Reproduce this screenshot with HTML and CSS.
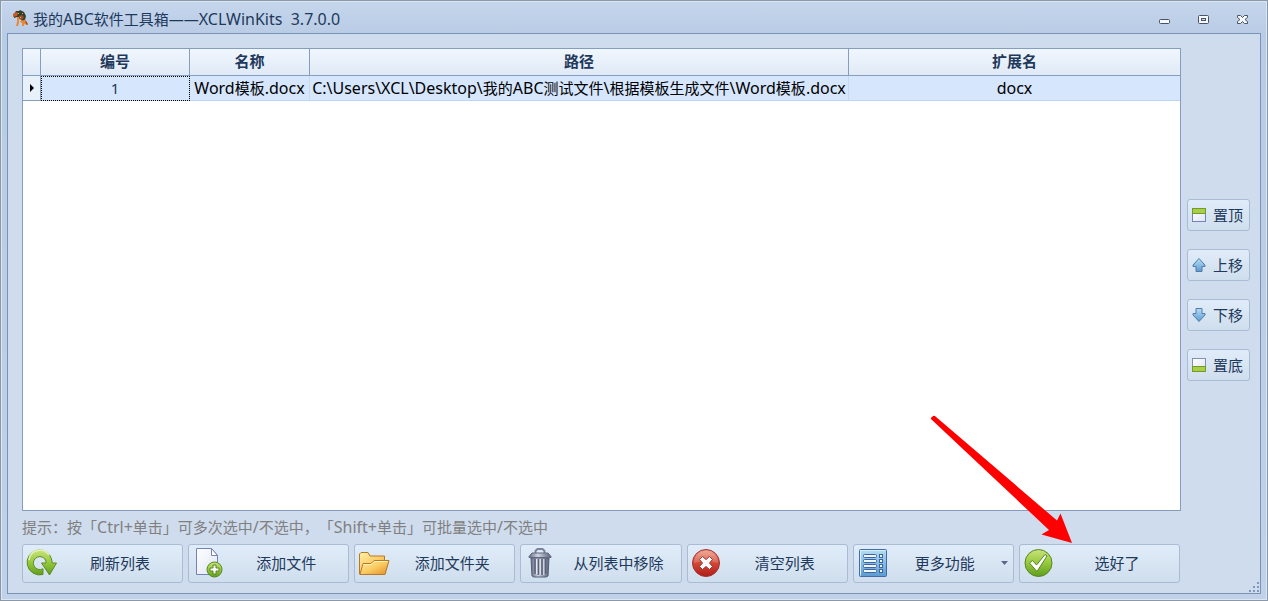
FILE: index.html
```html
<!DOCTYPE html>
<html lang="zh-CN">
<head>
<meta charset="utf-8">
<title>我的ABC软件工具箱</title>
<link rel="stylesheet" href="styles.css">
</head>
<body>
<svg class="defs" width="0" height="0" aria-hidden="true">
  <defs>
    <linearGradient id="green" x1="0" y1="0" x2="0" y2="1"><stop offset="0" stop-color="#c9e37c"/><stop offset=".5" stop-color="#97c93c"/><stop offset="1" stop-color="#5e9e1c"/></linearGradient>
    <linearGradient id="red" x1="0" y1="0" x2="0" y2="1"><stop offset="0" stop-color="#f0a08c"/><stop offset=".5" stop-color="#d24838"/><stop offset="1" stop-color="#b01c18"/></linearGradient>
    <linearGradient id="gold" x1="0" y1="0" x2="1" y2="1"><stop offset="0" stop-color="#fff0a8"/><stop offset=".5" stop-color="#fbcb62"/><stop offset="1" stop-color="#df8d28"/></linearGradient>
    <linearGradient id="blue" x1="0" y1="0" x2="0" y2="1"><stop offset="0" stop-color="#b4dff2"/><stop offset="1" stop-color="#5b9bd2"/></linearGradient>
    <linearGradient id="steel" x1="0" y1="0" x2="1" y2="0"><stop offset="0" stop-color="#626a84"/><stop offset=".4" stop-color="#cfd4de"/><stop offset="1" stop-color="#5a627c"/></linearGradient>
    <linearGradient id="paper" x1="0" y1="0" x2="1" y2="1"><stop offset="0" stop-color="#ffffff"/><stop offset="1" stop-color="#dfe5f6"/></linearGradient>
  </defs>
</svg>
<div class="window">
  <header class="titlebar">
    <svg class="app-icon" width="18" height="18" viewBox="0 0 18 18" aria-hidden="true">
      <path d="M2 4 4 1h3l1-1 4 2 2 4-1 4-3 1-2-3-3-1-3 1z" fill="#34402a"/>
      <path d="m1 4 3-2 2 1-1 3-4 1z" fill="#c75c28"/>
      <path d="m7 6 3-1 2 2-2 3-3-1z" fill="#9b4f2a"/>
      <path d="M5 7h2v6l-1 3H4l1-4zM9 10l3 1 1-2 1 3 2 2-1 1-3-1v2h-2v-3l-2-1z" fill="#e98a35"/>
      <path d="M6 3h1v1H6zm4 0h1v1h-1zM8 7h1v1H8z" fill="#f0b070"/>
      <path d="M13 10l2 2 1 3-2-1z" fill="#a44b20"/>
    </svg>
    <h1 class="title">我的<span class="latin">ABC</span>软件工具箱——<span class="latin">XCLWinKits  3.7.0.0</span></h1>
    <div class="controls">
      <button class="control" type="button" aria-label="最小化"><svg width="12" height="11" viewBox="0 0 12 11"><rect x=".5" y="5.5" width="10" height="4" rx="1" fill="#f5f8fc" stroke="#4a5266"/></svg></button>
      <button class="control" type="button" aria-label="最大化"><svg width="12" height="11" viewBox="0 0 12 11"><rect x=".5" y="1.5" width="10" height="8" rx="1" fill="#f5f8fc" stroke="#4a5266"/><rect x="3.5" y="4.5" width="4" height="2" fill="#cbd8ea" stroke="#4a5266"/></svg></button>
      <button class="control" type="button" aria-label="关闭"><svg width="12" height="11" viewBox="0 0 12 11"><path d="M1 1.500h2.500L5.500 3.500l2-2H10.500v2l-2.500 2 2.500 2v2H7.500l-2-2-2 2H.5v-2l2.500-2-2.500-2v-2z" fill="#f5f8fc" stroke="#4a5266"/></svg></button>
    </div>
  </header>
  <main class="client">
    <div class="workspace">
      <div class="grid">
        <table class="files">
          <colgroup><col class="col-mark"><col class="col-id"><col class="col-name"><col class="col-path"><col></colgroup>
          <thead><tr><th></th><th>编号</th><th>名称</th><th>路径</th><th>扩展名</th></tr></thead>
          <tbody><tr>
            <td class="mark"><svg width="4" height="8" viewBox="0 0 4 8"><path d="M0 0l4 4-4 4z" fill="#000"/></svg></td>
            <td class="focused">1</td>
            <td><span class="latin">Word</span>模板<span class="latin">.docx</span></td>
            <td><span class="latin">C:\Users\XCL\Desktop\</span>我的<span class="latin">ABC</span>测试文件<span class="latin">\</span>根据模板生成文件<span class="latin">\Word</span>模板<span class="latin">.docx</span></td>
            <td><span class="latin">docx</span></td>
          </tr></tbody>
        </table>
      </div>
      <div class="order">
        <button class="button small" type="button"><svg width="16" height="16" viewBox="0 0 16 16"><rect x="1.500" y="1.500" width="13" height="13" fill="url(#paper)" stroke="#7482b8"/><rect x="1.500" y="1.500" width="13" height="5" fill="#a9cf45" stroke="#739a2c"/></svg><span>置顶</span></button>
        <button class="button small" type="button"><svg width="16" height="16" viewBox="0 0 16 16"><path d="M8 1.500 14 8v1.500h-3v5H5v-5H2V8z" fill="url(#blue)" stroke="#5578ad"/></svg><span>上移</span></button>
        <button class="button small" type="button"><svg width="16" height="16" viewBox="0 0 16 16"><path d="M8 14.500 14 8V6.500h-3v-5H5v5H2V8z" fill="url(#blue)" stroke="#5578ad"/></svg><span>下移</span></button>
        <button class="button small" type="button"><svg width="16" height="16" viewBox="0 0 16 16"><rect x="1.500" y="1.500" width="13" height="13" fill="url(#paper)" stroke="#8290b8"/><rect x="1.500" y="9.500" width="13" height="5" fill="#a9cf45" stroke="#739a2c"/></svg><span>置底</span></button>
      </div>
    </div>
    <p class="hint">提示：按「<span class="latin">Ctrl+</span>单击」可多次选中<span class="latin">/</span>不选中，「<span class="latin">Shift+</span>单击」可批量选中<span class="latin">/</span>不选中</p>
    <div class="actions">
      <button class="button" type="button">
        <svg width="32" height="32" viewBox="0 0 32 32"><path d="M26 14A12.500 12.500 0 1 0 17 27.500V21.800A6.500 6.500 0 1 1 20 14v2h-4.500l8 12 7-12H26z" fill="url(#green)" stroke="#5d8d25"/><path d="M3 13A11 11 0 0 1 23 8" fill="none" stroke="#e4f3b4" stroke-width="1.500"/></svg>
        <span>刷新列表</span></button>
      <button class="button" type="button">
        <svg width="32" height="32" viewBox="0 0 32 32"><path d="M4.500 1.500h15l6 7v19h-21z" fill="url(#paper)" stroke="#7482b4"/><path d="M19.500 1.500v7h6z" fill="#fff" stroke="#7482b4"/><circle cx="22.500" cy="22.500" r="7.500" fill="url(#green)" stroke="#568723"/><path d="M21 18h3v3h3v3h-3v3h-3v-3h-3v-3h3z" fill="#fff" stroke="#568723"/></svg>
        <span>添加文件</span></button>
      <button class="button" type="button">
        <svg width="32" height="32" viewBox="0 0 32 32"><path d="M1.500 27V7L3 5.500h7l2 3.500h14.500v5H30.500L26 27.500H2z" fill="url(#gold)" stroke="#b97825"/><path d="M5 16.500h8l3-3h15L27 27.500H2z" fill="url(#gold)" stroke="#b97825"/><path d="M5.500 17.500h8l3-3h13" fill="none" stroke="#fff2b8"/></svg>
        <span>添加文件夹</span></button>
      <button class="button" type="button">
        <svg width="32" height="32" viewBox="0 0 32 32"><path d="M11.500 6.500V4l2-2h5l2 2v2.500" fill="none" stroke="#7b8398" stroke-width="2"/><path d="M7 11h18l-1 18-2 1H10l-2-1z" fill="url(#steel)" stroke="#555d78"/><path d="M11 12v15M14.500 12v16M18 12v16M21.500 12v15" stroke="#596078" stroke-width="1.500"/><path d="M12.500 12v15M16.200 12v16M19.800 12v16" stroke="#e6eaf0"/><path d="M5 9.500 8 6h16l3 3.500v1H5z" fill="url(#steel)" stroke="#606880"/></svg>
        <span>从列表中移除</span></button>
      <button class="button" type="button">
        <svg width="32" height="32" viewBox="0 0 32 32"><circle cx="15" cy="16" r="13.500" fill="url(#red)" stroke="#a13431"/><path d="M3 16a12 12 0 0 1 24 0q-12-4-24 0z" fill="#fff" opacity=".15"/><path d="m11.500 9.500 3.500 3 3.500-3 3 3-3 3.500 3 3.500-3 3-3.500-3-3.500 3-3-3 3-3.500-3-3.500z" fill="#fafafa" stroke="#9f3431" stroke-linejoin="round"/></svg>
        <span>清空列表</span></button>
      <button class="button" type="button">
        <svg width="32" height="32" viewBox="0 0 32 32"><rect x="2.500" y="2.500" width="27" height="27" rx="1" fill="url(#blue)" stroke="#426ba8"/><path d="M3.500 28.500v-25h25" fill="none" stroke="#d6f0fa"/><g fill="#eef7ff" stroke="#3e63a3"><rect x="6.500" y="7.500" width="13" height="3" rx="1"/><rect x="6.500" y="12.500" width="13" height="3" rx="1"/><rect x="6.500" y="17.500" width="13" height="3" rx="1"/><rect x="6.500" y="22.500" width="13" height="3" rx="1"/><rect x="22.500" y="7.500" width="3" height="3"/><rect x="22.500" y="12.500" width="3" height="3"/><rect x="22.500" y="17.500" width="3" height="3"/><rect x="22.500" y="22.500" width="3" height="3"/></g></svg>
        <span>更多功能</span>
        <svg class="caret" width="7" height="4" viewBox="0 0 7 4"><path d="M0 0h7L3.500 4z" fill="#5a6788"/></svg></button>
      <button class="button" type="button">
        <svg width="32" height="32" viewBox="0 0 32 32"><circle cx="15.500" cy="16" r="13.500" fill="url(#green)" stroke="#568723"/><path d="m6.500 16 3-2.500 4 4.500L22 7.500l2 1.500-10 15.500z" fill="#fff" stroke="#568723"/></svg>
        <span>选好了</span></button>
    </div>
    <svg class="grip" width="11" height="11" viewBox="0 0 11 11" aria-hidden="true"><path d="M8 0h2v2H8zM4 4h2v2H4zM8 4h2v2H8zM0 8h2v2H0zM4 8h2v2H4zM8 8h2v2H8z" fill="#8098bd"/></svg>
    <svg class="pointer" width="142" height="130" viewBox="0 0 142 130" aria-hidden="true"><path d="M2.500 2.500Q4 1 5.500 2.500L127 106.500l3.500-7 11.500 29.500-30.500-8.500 7.500-4.500L1.500 5.500Q0 4 2.500 2.500z" fill="#f00"/></svg>
  </main>
</div>
</body>
</html>
```
FILE: styles.css
```css
* {
  box-sizing: border-box;
}

body {
  margin: 0;
  font: 15px/20px "Noto Sans", "Noto Sans CJK SC", sans-serif;
  color: #1e395b;
  text-spacing-trim: space-all;
}

.defs {
  position: absolute;
}

.latin {
  font-size: 16px;
  line-height: 16px;
}

.window {
  display: flex;
  flex-direction: column;
  min-height: 100vh;
  padding: 0 6px 6px;
  border: 1px solid #8c97a8;
  box-shadow: inset 0 0 0 1px #dce7f5;
  background: linear-gradient(#c5d6ec, #b9cce5 34px, #c0d1e8);
}

.titlebar {
  display: flex;
  align-items: center;
  height: 32px;
  padding: 4px 12px 0 5px;
}

.app-icon {
  margin-right: 3px;
}

.title {
  flex: 1;
  margin: 0;
  font-size: 15px;
  font-weight: 400;
  line-height: 20px;
  white-space: pre;
}

.controls {
  display: flex;
  gap: 27px;
}

.control {
  display: flex;
  padding: 0;
  border: 0;
  background: none;
}

.client {
  position: relative;
  display: flex;
  flex: 1;
  flex-direction: column;
  padding: 14px 10px 10px 14px;
  border: 1px solid #7893b6;
  background: #cfdcee;
}

.workspace {
  display: flex;
  flex: 1;
  gap: 6px;
}

.grid {
  flex: 1;
  border: 1px solid #859ebf;
  background: #fff;
}

.files {
  width: 100%;
  border-collapse: separate;
  border-spacing: 0;
  table-layout: fixed;
}

.col-mark {
  width: 18px;
}

.col-id {
  width: 149px;
}

.col-name {
  width: 120px;
}

.col-path {
  width: 539px;
}

.files th,
.files td {
  padding: 0;
  text-align: center;
  white-space: nowrap;
}

.files th {
  height: 27px;
  padding-bottom: 2px;
  border-right: 1px solid #859ebf;
  border-bottom: 1px solid #859ebf;
  background: linear-gradient(#f0f6fd, #e0eaf6);
  font-weight: 700;
}

.files td {
  height: 25px;
  border-right: 1px solid #c3daf5;
  border-bottom: 1px solid #bcd6f5;
  background: #d5e6fd;
  color: #000;
}

.files th:last-child,
.files td:last-child {
  border-right: 0;
}

.files .mark {
  border-color: #859ebf;
  background: #e8f0fa;
}

.mark svg {
  display: block;
  margin: 0 auto;
}

.files .focused {
  outline: 1px dotted #000;
  outline-offset: -1px;
  color: #1e395b;
}

.order {
  display: flex;
  flex-direction: column;
  gap: 18px;
  width: 63px;
  padding-top: 151px;
}

.button {
  display: flex;
  align-items: center;
  gap: 3px;
  height: 39px;
  padding: 0 3px 2px;
  border: 1px solid #aabbd4;
  border-radius: 3px;
  background: linear-gradient(#e0ecf9, #cfdeed);
  color: #1e395b;
  font: inherit;
  white-space: nowrap;
}

.button span {
  flex: 1;
  text-align: center;
}

.button.small {
  height: 32px;
  padding-bottom: 0;
}

.hint {
  margin: 6px 0 7px;
  color: #808080;
}

.actions {
  display: grid;
  grid-template-columns: repeat(7, 1fr);
  gap: 5px;
  margin-right: 70px;
}

.caret {
  margin-right: 2px;
}

.grip {
  position: absolute;
  right: 0;
  bottom: 0;
}

.pointer {
  position: absolute;
  right: 188px;
  bottom: 49px;
}
```
